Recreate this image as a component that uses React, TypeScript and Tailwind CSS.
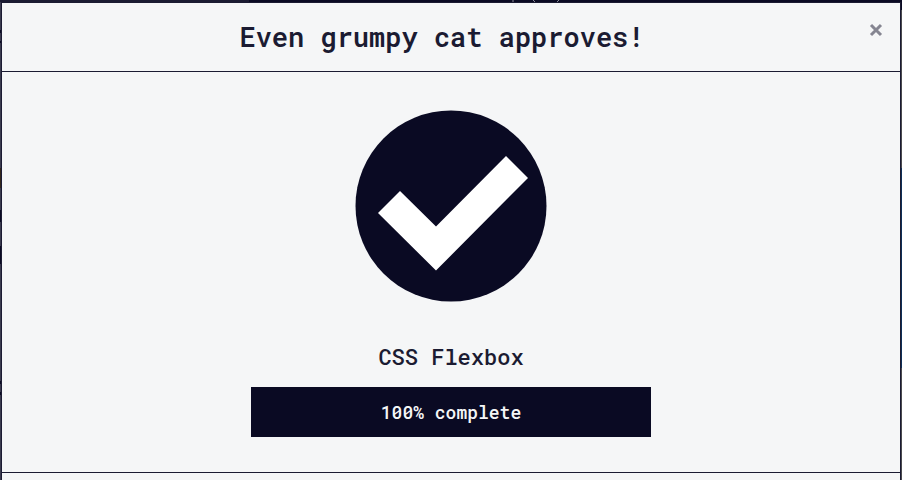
const mono = "font-['Roboto_Mono','DejaVu_Sans_Mono',monospace]";

function CheckIcon() {
  return (
    <svg className="block size-48" viewBox="0 0 192 192" role="img" aria-label="Passed">
      <circle cx="96" cy="96" r="95.5" fill="#0a0a23" />
      <path d="M23 103 45 81 81 116.500 151 46 173 68 81 160.500Z" fill="#fff" />
    </svg>
  );
}

export default function App() {
  return (
    <div className={`flex h-screen flex-col overflow-hidden bg-[#0a0a23] text-[#1b1b32] ${mono}`}>
      <div className="flex h-[2px] shrink-0">
        <div className="w-[249px] bg-[#1b1b32]" />
        <svg className="ml-[262px] block h-[2px] w-[60px]" viewBox="0 0 60 2" aria-hidden="true">
          <path d="M2 0V2M22 0l2 2M48 0l-2 2" stroke="#8a8a99" fill="none" />
        </svg>
      </div>
      <div className="flex min-h-0 grow">
        <div className="flex w-px shrink-0 flex-col bg-[#3b3b4f]">
          <div className="mt-[28px] h-[3px] bg-[#0a0a23]" />
          <div className="mt-[8px] h-[2px] bg-[#0a0a23]" />
          <div className="mt-[125px] h-[20px] bg-[#33271c]" />
          <div className="mt-[22px] h-[12px] bg-[#0a0a23]" />
          <div className="mt-[24px] h-[18px] bg-[#0a0a23]" />
          <div className="mt-[117px] h-[3px] bg-[#0a0a23]" />
          <div className="mt-[8px] h-[3px] bg-[#0a0a23]" />
        </div>
        <div role="dialog" aria-labelledby="title" className="flex min-w-0 grow flex-col border border-b-0 border-[#1b1b32] bg-[#f5f6f7]">
          <header className="flex shrink-0 items-start border-b border-[#1b1b32]">
            <h1 id="title" className="grow py-4 pl-5 text-center text-[27px] leading-9 font-semibold">
              Even grumpy cat approves!
            </h1>
            <button type="button" aria-label="Close" className="mt-3.5 mr-2.5 flex size-7 shrink-0 items-center justify-center text-[#858591]">
              <svg className="size-4" viewBox="0 0 16 16" aria-hidden="true">
                <path d="M3 2 13 12M13 2 3 12" stroke="currentColor" strokeWidth="3" />
              </svg>
            </button>
          </header>
          <main className="flex shrink-0 flex-col items-center px-4 pt-[38px] pb-[35px]">
            <CheckIcon />
            <h2 className="mt-[39px] text-[22px] leading-8 font-medium">CSS Flexbox</h2>
            <div className="mt-3.5 flex h-[50px] w-full max-w-[400px] items-center justify-center bg-[#0a0a23] text-lg font-medium text-[#f5f6f7]">
              100% complete
            </div>
          </main>
          <footer className="grow border-t border-[#1b1b32]" />
        </div>
        <div className="flex w-px shrink-0 flex-col bg-[#4a4a4f]">
          <div className="h-[8px] bg-[#0a0a23]" />
          <div className="mt-[158px] h-[200px] bg-[#0f2f57]" />
        </div>
      </div>
    </div>
  );
}
